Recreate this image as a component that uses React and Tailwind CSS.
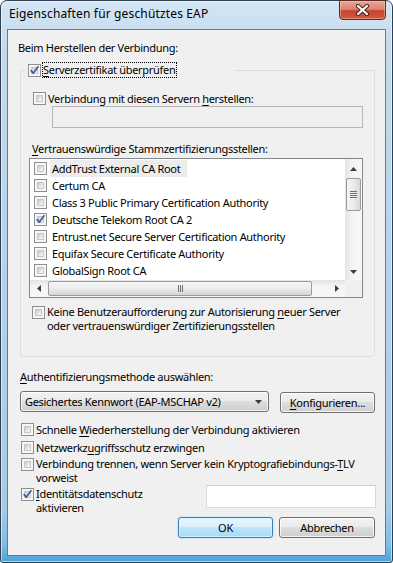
import React from "react";

const FONT = "font-['Noto_Sans',sans-serif]";

function Check({ checked }) {
  return (
    <span className="relative w-[13px] h-[13px] shrink-0 border border-[#8e8f8f] bg-[#f6f6f6] p-[2px] flex">
      <span className="flex-1 border border-[#c4c8ce] bg-[linear-gradient(135deg,#c3c9d1_0%,#e3e6ea_55%,#f9f9f9_100%)]" />
      {checked && (
        <svg className="absolute left-0 top-0" width="11" height="11" viewBox="0 0 11 11">
          <path d="M2.2 5.6 L4.3 8.2 L9 1.8" stroke="#44579a" strokeWidth="1.7" fill="none" strokeLinecap="round" strokeLinejoin="round" />
        </svg>
      )}
    </span>
  );
}

function Arrow({ dir }) {
  const paths = {
    up: "M0 4 L3.5 0 L7 4 Z",
    down: "M0 0 L7 0 L3.5 4 Z",
    left: "M4 0 L4 7 L0 3.5 Z",
    right: "M0 0 L4 3.5 L0 7 Z",
  };
  const vert = dir === "up" || dir === "down";
  return (
    <svg width={vert ? 7 : 4} height={vert ? 4 : 7} viewBox={vert ? "0 0 7 4" : "0 0 4 7"}>
      <path d={paths[dir]} fill="#3c3c3c" />
    </svg>
  );
}

const certs = [
  ["AddTrust External CA Root", false, true],
  ["Certum CA", false],
  ["Class 3 Public Primary Certification Authority", false],
  ["Deutsche Telekom Root CA 2", true],
  ["Entrust.net Secure Server Certification Authority", false],
  ["Equifax Secure Certificate Authority", false],
  ["GlobalSign Root CA", false],
];

function CertList() {
  return (
    <div className="ml-[8px] mt-[2px] w-[334px] h-[140px] border border-[#828790] bg-white flex flex-col">
      <div className="flex h-[121px]">
        <div className="flex-1 pt-[1px] overflow-hidden">
          {certs.map(([name, checked, hl]) => (
            <div key={name} className="h-[17px] flex items-center pl-[4px] whitespace-nowrap">
              <Check checked={checked} />
              <span className={"ml-[3px] pl-[2px] pr-[7px] leading-[17px] " + (hl ? "bg-[#ececec]" : "")}>{name}</span>
            </div>
          ))}
        </div>
        <div className="w-[17px] flex flex-col bg-[linear-gradient(90deg,#e3e3e3_0%,#f4f4f4_40%,#f7f7f7_100%)]">
          <div className="h-[17px] flex items-center justify-center pt-[2px]"><Arrow dir="up" /></div>
          <div className="mt-[2px] mx-[1px] h-[33px] rounded-[2px] border border-[#9b9b9b] bg-[linear-gradient(90deg,#f4f4f4_0%,#ececec_50%,#d7d7d7_100%)] flex flex-col items-center justify-center gap-[1px]">
            <span className="w-[7px] h-[1px] bg-[#707070]" />
            <span className="w-[7px] h-[1px] bg-[#707070]" />
            <span className="w-[7px] h-[1px] bg-[#707070]" />
            <span className="w-[7px] h-[1px] bg-[#707070]" />
          </div>
          <div className="flex-1" />
          <div className="h-[17px] flex items-center justify-center"><Arrow dir="down" /></div>
        </div>
      </div>
      <div className="flex h-[17px]">
        <div className="flex-1 flex items-center bg-[linear-gradient(180deg,#e3e3e3_0%,#f4f4f4_40%,#f7f7f7_100%)]">
          <div className="w-[17px] h-[17px] flex items-center justify-center"><Arrow dir="left" /></div>
          <div className="ml-[1px] w-[264px] h-[15px] rounded-[2px] border border-[#9b9b9b] bg-[linear-gradient(180deg,#f6f6f6_0%,#ececec_50%,#d5d5d5_100%)] flex items-center justify-center gap-[1px]">
            <span className="w-[1px] h-[7px] bg-[#707070]" />
            <span className="w-[1px] h-[7px] bg-[#707070]" />
            <span className="w-[1px] h-[7px] bg-[#707070]" />
          </div>
          <div className="flex-1" />
          <div className="w-[17px] h-[17px] flex items-center justify-center"><Arrow dir="right" /></div>
        </div>
        <div className="w-[17px] bg-[#f0f0f0]" />
      </div>
    </div>
  );
}

const btnBase =
  "h-[21px] rounded-[3px] border border-[#707070] bg-[linear-gradient(180deg,#f2f2f2_0%,#ebebeb_45%,#dddddd_50%,#cfcfcf_100%)] shadow-[inset_0_0_0_1px_rgba(255,255,255,0.75)] flex items-center justify-center";

export default function App() {
  return (
    <div className={FONT + " w-[393px] h-[563px] text-[11px] tracking-[-0.3px] text-black bg-white"}>
      <div className="w-[393px] h-[563px] rounded-t-[7px] rounded-b-[3px] border border-[#2f3e50] bg-[linear-gradient(180deg,#d5e6f4_0%,#c3daee_8%,#b7d2ea_45%,#a8cae6_90%,#7dbde6_97%,#4aa3da_100%)] shadow-[inset_0_0_0_1px_rgba(255,255,255,0.55)] flex flex-col">
        <div className="h-[28px] flex items-start justify-between">
          <div className="pl-[8px] pt-[5px] text-[12px] tracking-[0.15px] leading-[16px]">Eigenschaften für geschütztes EAP</div>
          <div className="mr-[6px] mt-[-1px] w-[47px] h-[20px] rounded-b-[4px] border border-[#5c2a22] bg-[linear-gradient(180deg,#e9a797_0%,#dc8472_45%,#c7442e_55%,#cf5a3c_100%)] shadow-[inset_0_0_0_1px_rgba(255,210,200,0.45)] flex items-center justify-center">
            <svg width="15" height="12" viewBox="0 0 15 12">
              <path d="M3 2 L12 10 M12 2 L3 10" stroke="#4a2420" strokeWidth="4.2" strokeLinecap="round" />
              <path d="M3 2 L12 10 M12 2 L3 10" stroke="#ffffff" strokeWidth="2.2" strokeLinecap="round" />
            </svg>
          </div>
        </div>

        <div className="mx-[6px] h-[527px] border border-[#6b7887] bg-[#f0f0f0] flex flex-col">
          <div className="mt-[10px] ml-[10px] leading-[15px] h-[15px]">Beim Herstellen der Verbindung:</div>

          <fieldset className="mt-[7px] ml-[12px] w-[355px] rounded-[3px] border border-[#d5dfe5] pb-[23px] flex flex-col">
            <legend className="ml-[5px] w-[208px] h-[16px] pl-[2px] flex items-center">
              <Check checked />
              <span className="ml-[1px] border border-dotted border-black pr-[1px] leading-[14px]">
                <u className="underline-offset-2">S</u>erverzertifikat überprüfen
              </span>
            </legend>

            <div className="mt-[13px] ml-[12px] h-[15px] flex items-center">
              <Check />
              <span className="ml-[2px] leading-[15px]">
                Verbindung mit diesen Servern <u className="underline-offset-2">h</u>erstellen:
              </span>
            </div>
            <div className="ml-[31px] w-[311px] h-[22px] border border-[#b5b8bb] bg-[#f0f0f0]" />

            <div className="mt-[13px] ml-[11px] leading-[15px] h-[15px]">
              <u className="underline-offset-2">V</u>ertrauenswürdige Stammzertifizierungsstellen:
            </div>
            <CertList />

            <div className="mt-[7px] ml-[11px] flex items-start">
              <span className="mt-[1px]"><Check /></span>
              <span className="ml-[2px] leading-[14px]">
                Keine Benutzeraufforderung zur Autorisierung <u className="underline-offset-2">n</u>euer Server
                <br />
                oder vertrauenswürdiger Zertifizierungsstellen
              </span>
            </div>
          </fieldset>

          <div className="mt-[12px] ml-[12px] leading-[15px] h-[15px]">
            <u className="underline-offset-2">A</u>uthentifizierungsmethode auswählen:
          </div>

          <div className="mt-[7px] ml-[12px] flex items-start">
            <div className={btnBase + " w-[249px] !justify-between pl-[4px] pr-[6px]"}>
              <span className="leading-[15px]">Gesichertes Kennwort (EAP-MSCHAP v2)</span>
              <Arrow dir="down" />
            </div>
            <div className={btnBase + " ml-[11px] mt-[1px] w-[95px]"}>
              <span className="leading-[15px]"><u className="underline-offset-2">K</u>onfigurieren...</span>
            </div>
          </div>

          <div className="mt-[9px] ml-[13px] h-[15px] flex items-center">
            <Check />
            <span className="ml-[2px] leading-[15px]">
              Schnelle <u className="underline-offset-2">W</u>iederherstellung der Verbindung aktivieren
            </span>
          </div>
          <div className="mt-[3px] ml-[13px] h-[15px] flex items-center">
            <Check />
            <span className="ml-[2px] leading-[15px]">
              Netzwerkz<u className="underline-offset-2">u</u>griffsschutz erzwingen
            </span>
          </div>
          <div className="mt-[2px] ml-[13px] flex items-start">
            <span className="mt-[1px]"><Check /></span>
            <span className="ml-[2px] leading-[14px]">
              Verbindung trennen, wenn Server kein Kryptografiebindungs-<u className="underline-offset-2">T</u>LV
              <br />
              vorweist
            </span>
          </div>
          <div className="ml-[13px] mr-[9px] flex items-start justify-between">
            <div className="mt-[2px] flex items-start">
              <span className="mt-[1px]"><Check checked /></span>
              <span className="ml-[2px] leading-[14px]">
                <u className="underline-offset-2">I</u>dentitätsdatenschutz
                <br />
                aktivieren
              </span>
            </div>
            <div className="w-[170px] h-[23px] border border-[#d6dbe1] border-t-[#c9ced4] bg-white" />
          </div>

          <div className="mt-[2px] mr-[10px] flex justify-end gap-[6px]">
            <div className="w-[95px] h-[21px] rounded-[3px] border border-[#3c7fb1] bg-[linear-gradient(180deg,#eaf6fd_0%,#d9f0fc_45%,#bee6fd_50%,#a7d9f5_100%)] shadow-[inset_0_0_0_1px_rgba(210,245,255,0.9),0_0_2px_rgba(80,190,240,0.6)] flex items-center justify-center">
              <span className="leading-[15px]">OK</span>
            </div>
            <div className={btnBase + " w-[96px]"}>
              <span className="leading-[15px]">Abbrechen</span>
            </div>
          </div>
        </div>
      </div>
    </div>
  );
}
